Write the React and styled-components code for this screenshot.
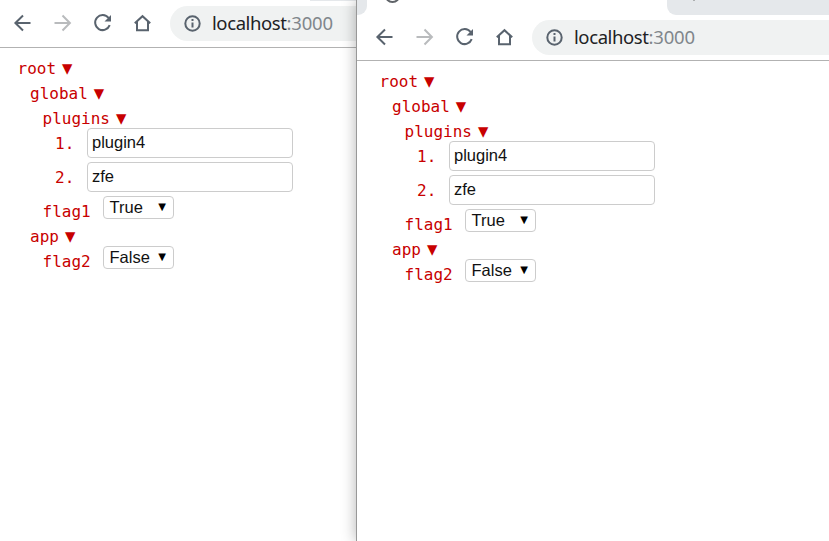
import React from "react";
import styled, { createGlobalStyle } from "styled-components";

const GlobalStyle = createGlobalStyle`
  * { box-sizing: border-box; }
  body { margin: 0; background: #fff; overflow: hidden; }
`;

const Desktop = styled.div`
  display: flex;
  width: 829px;
  height: 541px;
  overflow: hidden;
  background: #fff;
`;

const BackWindow = styled.section`
  width: 356px;
  flex: none;
  overflow: hidden;
`;

const FrontWindow = styled.section`
  flex: 1;
  min-width: 0;
  position: relative;
  background: #fff;
  border-left: 1px solid #989898;
  box-shadow: 0 0 14px rgba(0, 0, 0, 0.3);
`;

const TabStrip = styled.div`
  display: flex;
  height: ${(p) => p.$height}px;
  overflow: hidden;
`;

const TabEdge = styled.div`
  width: 10px;
  background: #e5e8eb;
  border-bottom-right-radius: 9px;
`;

const ActiveTab = styled.div`
  width: ${(p) => p.$width}px;
  padding-left: 18px;
  svg { display: block; }
`;

const InactiveTabs = styled.div`
  flex: 1;
  padding-left: 25px;
  background: #e5e8eb;
  border-bottom-left-radius: ${(p) => p.$radius}px;
  svg { display: block; }
`;

const Toolbar = styled.header`
  display: flex;
  align-items: flex-start;
  height: ${(p) => p.$height}px;
  padding-top: 5px;
  padding-left: ${(p) => p.$inset}px;
  border-bottom: 1px solid #b2b2b2;
`;

const NavButtons = styled.nav`
  display: flex;
  gap: 16px;
  width: 160px;
  height: 34px;
  align-items: center;
  flex: none;
`;

const Icon = styled.svg`
  width: 24px;
  height: 24px;
  flex: none;
  fill: none;
  stroke: ${(p) => p.$color || "#59636e"};
  stroke-width: 2;
`;

const AddressBar = styled.div`
  display: flex;
  align-items: flex-start;
  flex: 1;
  height: 35px;
  padding: 5px 0 0 10px;
  background: #f0f2f2;
  border-radius: 18px 0 0 18px;
`;

const Host = styled.span`
  margin-left: 8px;
  font: 18.5px/24px "Noto Sans", sans-serif;
  letter-spacing: -0.4px;
  color: #202124;
  white-space: nowrap;
`;

const Port = styled.span`
  color: #80868b;
  letter-spacing: -0.2px;
`;

const Tree = styled.main`
  padding: 8px 0 0 ${(p) => p.$inset}px;
  color: #c80000;
  font: 16px/25px "DejaVu Sans Mono", monospace;
`;

const Branch = styled.div`
  padding-left: ${(p) => (p.$root ? 0 : 12.5)}px;
`;

const BranchLabel = styled.div`
  display: flex;
  height: ${(p) => (p.$tight ? 22 : 25)}px;
`;

const Arrow = styled.span`
  margin-left: 6px;
  font: 13.5px/25px "DejaVu Sans", sans-serif;
`;

const ListItem = styled.div`
  display: flex;
  height: 34px;
  padding-left: 12.5px;
`;

const Index = styled.span`
  width: 32px;
  line-height: 32px;
`;

const TextField = styled.input`
  width: 206px;
  height: 30px;
  padding: 0 4px 1px;
  border: 1px solid #ccc;
  border-radius: 4px;
  outline: 0;
  background: #fff;
  color: #111;
  font: 16.5px "Liberation Sans", Arial, sans-serif;
`;

const Field = styled.div`
  display: flex;
  height: 28px;
  padding-left: 12.5px;
`;

const FieldName = styled.span`
  width: 60.5px;
  padding-top: 3px;
`;

const Dropdown = styled.button`
  display: flex;
  align-items: center;
  justify-content: space-between;
  width: 71px;
  height: 23px;
  padding: 0 7px 1px 5.5px;
  border: 1px solid #ccc;
  border-radius: 4px;
  background: #fff;
  color: #111;
  font: 16.5px/20px "Liberation Sans", Arial, sans-serif;
`;

const Caret = styled.span`
  font: 10px/20px "DejaVu Sans", sans-serif;
  color: #000;
`;

function Navigation() {
  return (
    <NavButtons>
      <Icon viewBox="0 0 24 24"><path d="M20.5 12H6M13 4.5 5.4 12l7.6 7.5" /></Icon>
      <Icon viewBox="0 0 24 24" $color="#b9bbbd"><path d="M4.5 12h15M12.5 4.5l7.4 7.5-7.4 7.5" /></Icon>
      <Icon viewBox="0 0 24 24">
        <path d="M18.6 7A7.5 7.5 0 1 0 19.7 14.2" />
        <path d="M21 4v6.5h-6.5z" fill="#59636e" stroke="none" />
      </Icon>
      <Icon viewBox="0 0 24 24"><path d="M4.8 12.3 12.5 5.2l7.7 7.1M7 10.8V19.3h11v-8.5" /></Icon>
    </NavButtons>
  );
}

function Address() {
  return (
    <AddressBar>
      <Icon viewBox="0 0 24 24">
        <circle cx="12.5" cy="12.5" r="7.2" />
        <path d="M12.5 11.5v5M12.5 8v2" />
      </Icon>
      <Host>localhost<Port>:3000</Port></Host>
    </AddressBar>
  );
}

function Group({ name, tight, root, children }) {
  return (
    <Branch $root={root}>
      <BranchLabel $tight={tight}>{name}<Arrow>▼</Arrow></BranchLabel>
      {children}
    </Branch>
  );
}

function Flag({ name, value }) {
  return (
    <Field>
      <FieldName>{name}</FieldName>
      <Dropdown type="button">{value}<Caret>▼</Caret></Dropdown>
    </Field>
  );
}

function ConfigTree({ inset }) {
  return (
    <Tree $inset={inset}>
      <Group name="root" root>
        <Group name="global">
          <Group name="plugins" tight>
            {["plugin4", "zfe"].map((value, i) => (
              <ListItem key={value}>
                <Index>{i + 1}.</Index>
                <TextField defaultValue={value} aria-label={value} />
              </ListItem>
            ))}
          </Group>
          <Flag name="flag1" value="True" />
        </Group>
        <Group name="app" tight>
          <Flag name="flag2" value="False" />
        </Group>
      </Group>
    </Tree>
  );
}

export default function App() {
  return (
    <Desktop>
      <GlobalStyle />
      <BackWindow>
        <TabStrip $height={1}>
          <ActiveTab $width={310} />
          <InactiveTabs $radius={0} />
        </TabStrip>
        <Toolbar $height={47} $inset={10}>
          <Navigation />
          <Address />
        </Toolbar>
        <ConfigTree inset={17.5} />
      </BackWindow>
      <FrontWindow>
        <TabStrip $height={15}>
          <TabEdge />
          <ActiveTab $width={300}>
            <svg width="16" height="4"><circle cx="7.5" cy="-5" r="7" fill="none" stroke="#5f6368" strokeWidth="2" /></svg>
          </ActiveTab>
          <InactiveTabs $radius={9}>
            <svg width="4" height="2"><path d="M1 0h2L2 1z" fill="#777" /></svg>
          </InactiveTabs>
        </TabStrip>
        <Toolbar $height={46} $inset={15}>
          <Navigation />
          <Address />
        </Toolbar>
        <ConfigTree inset={22.5} />
      </FrontWindow>
    </Desktop>
  );
}
